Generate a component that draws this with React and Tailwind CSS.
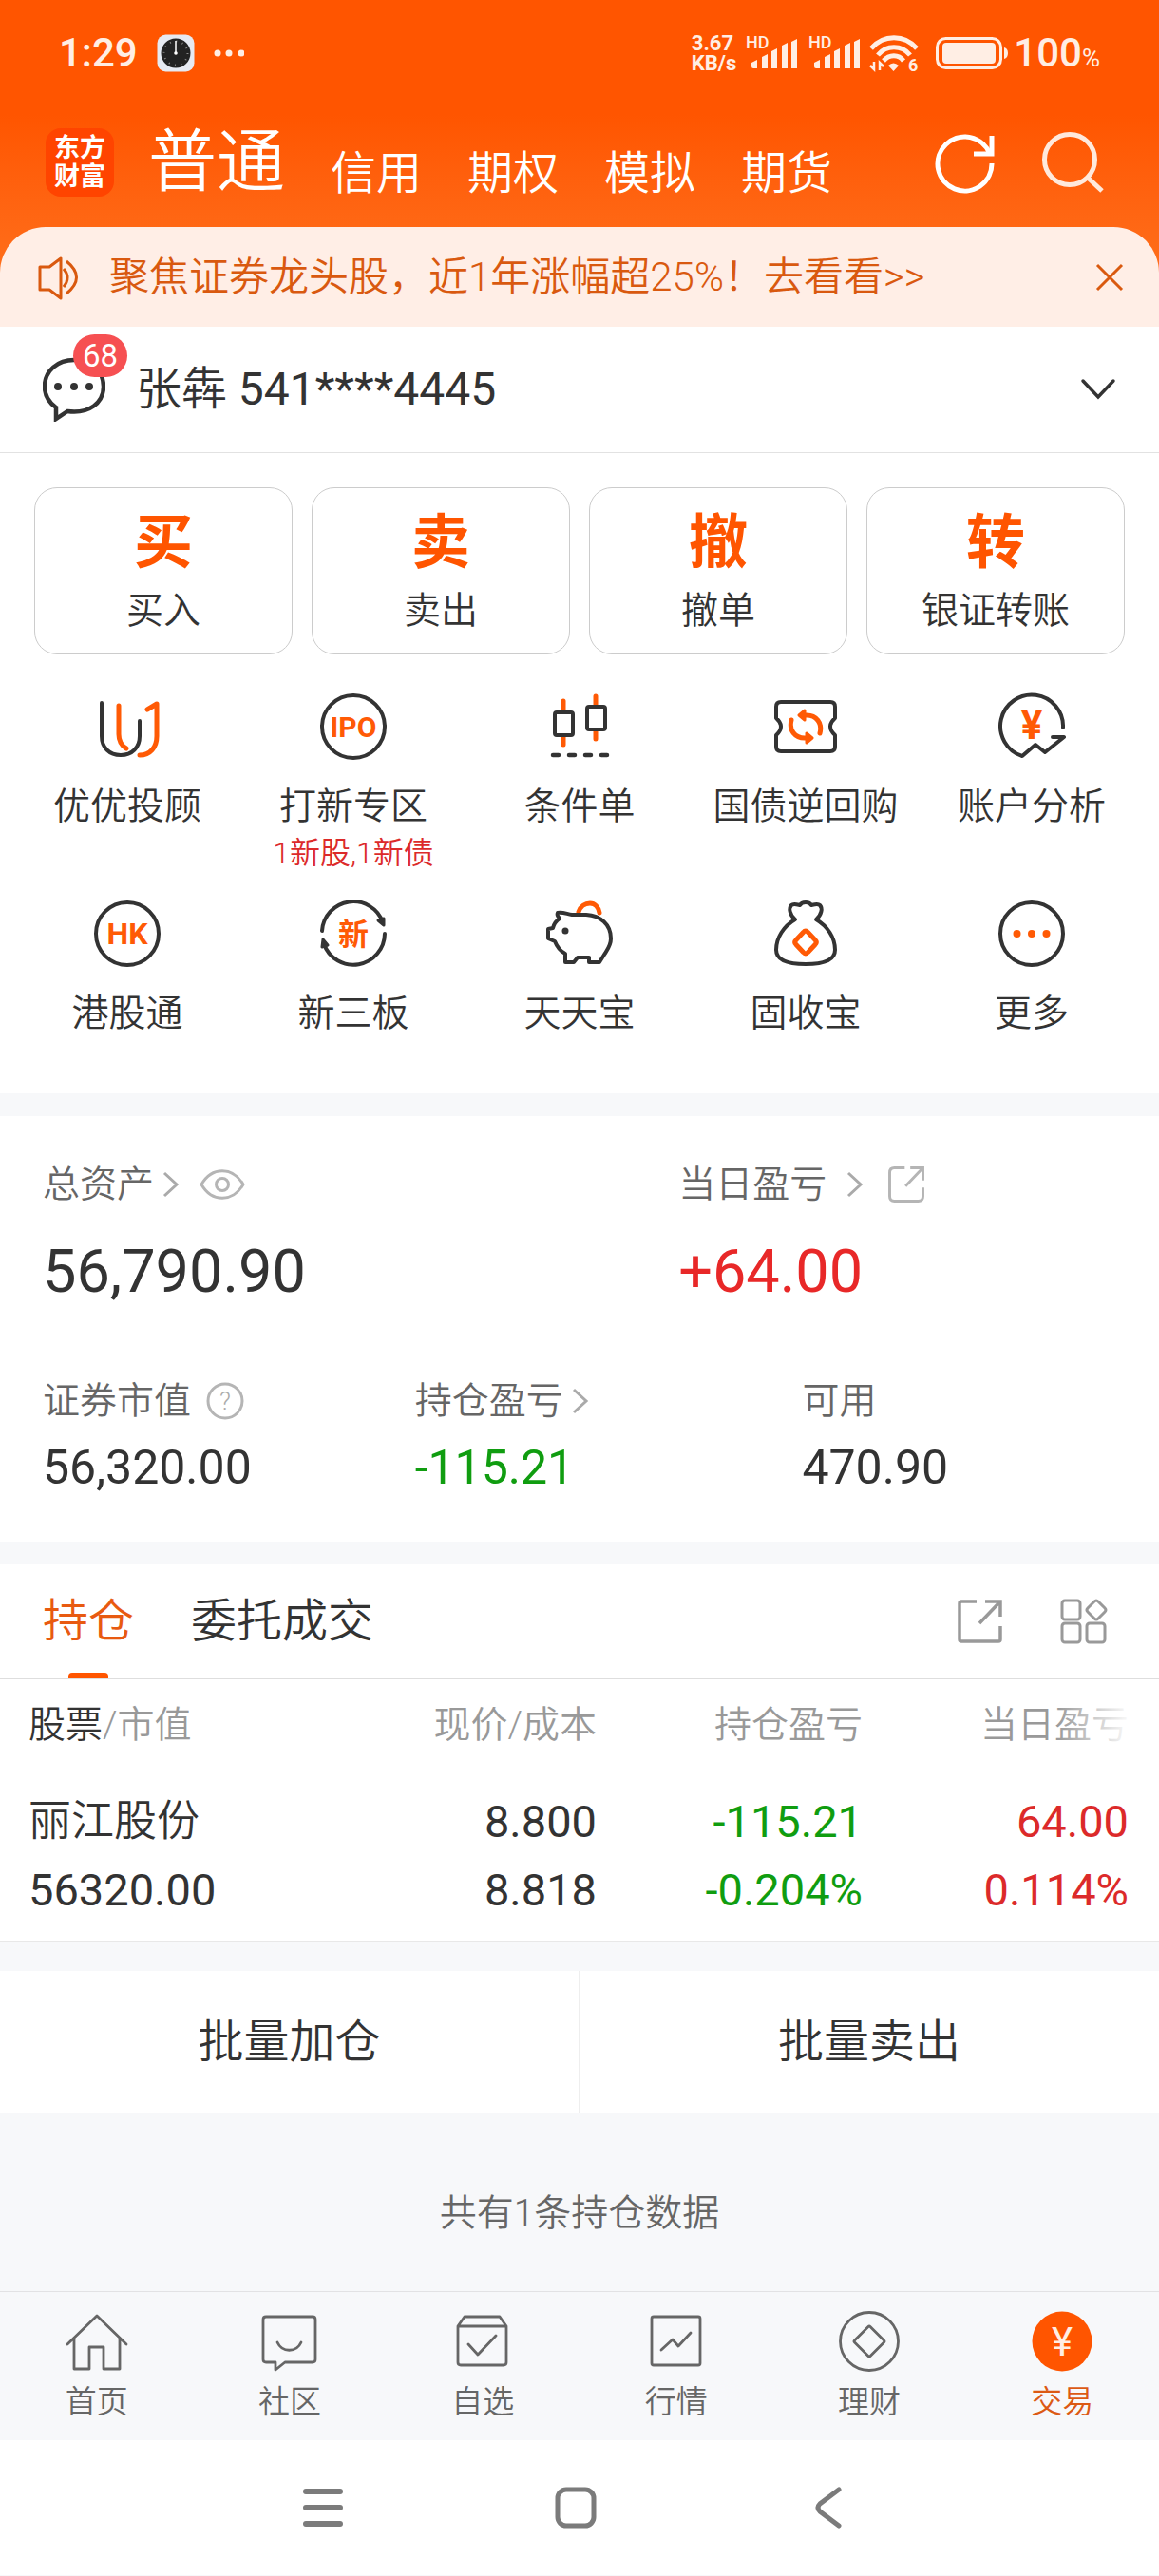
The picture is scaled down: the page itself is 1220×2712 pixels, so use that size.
import { useState } from 'react'

const markets = ['信用', '期权', '模拟', '期货']

const actions = [
  { mark: '买', label: '买入' },
  { mark: '卖', label: '卖出' },
  { mark: '撤', label: '撤单' },
  { mark: '转', label: '银证转账' },
]

const holdings = [
  {
    name: '丽江股份',
    value: '56320.00',
    price: '8.800',
    cost: '8.818',
    profit: '-115.21',
    profitRate: '-0.204%',
    today: '64.00',
    todayRate: '0.114%',
  },
]

function toneOf(value) {
  return value.startsWith('-') ? 'text-[#109d10]' : 'text-[#dc2a2a]'
}

/* ---------- status bar ---------- */

function ClockAppIcon() {
  return (
    <svg width="40" height="40" viewBox="0 0 40 40" aria-hidden="true">
      <rect x="0.5" y="0.5" width="39" height="39" rx="9" fill="#e6eaf2" />
      <circle cx="20" cy="20" r="15.5" fill="#222" />
      <circle cx="20" cy="20" r="12.5" fill="none" stroke="#888" strokeWidth="2" strokeDasharray="1 5.54" />
      <path d="M20 20V7" stroke="#fff" strokeWidth="1.5" />
      <circle cx="20" cy="20" r="1.8" fill="#fff" />
    </svg>
  )
}

function Signal() {
  return (
    <svg width="58" height="56" viewBox="-2 -9 58 56" fill="#ffeee4" aria-hidden="true">
      <text x="0" y="14" fontSize="18" fontWeight="500" fontFamily="Roboto">HD</text>
      <path d="M6 29l6-3v9H8a2 2 0 0 1-2-2z" />
      <path d="M17 23l6-3v15h-6zM27 17l6-3v21h-6zM38 11l6-3v27h-6zM48 7l6-3v31h-6z" />
    </svg>
  )
}

function Wifi() {
  return (
    <svg width="54" height="56" viewBox="0 -8 54 56" fill="none" stroke="#ffeee4" strokeWidth="5" aria-hidden="true">
      <path d="M2 15C15 0 37 0 50 15" />
      <path d="M9 22C18 11 34 11 43 22" />
      <path d="M15 28C21 21 31 21 36 28" />
      <path d="M20 33q5.500-5 11 0l-5.500 6z" fill="#ffeee4" stroke="none" />
      <path d="M5 29v8l-4-4M11 38v-8l4 4" strokeWidth="2.500" />
      <text x="41" y="39" fontSize="18" fontWeight="700" fontFamily="Roboto" fill="#ffeee4" stroke="none">6</text>
    </svg>
  )
}

function Battery() {
  return (
    <svg width="78" height="34" viewBox="0 0 78 34" aria-hidden="true">
      <rect x="1.500" y="1.500" width="67" height="31" rx="9" fill="none" stroke="#ffeee4" strokeWidth="3" />
      <rect x="7" y="6" width="56" height="22" rx="4" fill="#ffeee4" />
      <path d="M72 11q4 1 4 6t-4 6z" fill="#ffeee4" />
    </svg>
  )
}

function StatusBar() {
  return (
    <div className="flex h-28 items-center justify-between px-[62px] text-[#ffeee4]">
      <div className="flex items-center gap-5">
        <span className="text-[42px] leading-[48px] font-medium">1:29</span>
        <ClockAppIcon />
        <svg width="32" height="8" viewBox="0 0 32 8" fill="#ffeee4" aria-hidden="true">
          <circle cx="4" cy="4" r="3.500" />
          <circle cx="16" cy="4" r="3.500" />
          <circle cx="29" cy="4" r="3.500" />
        </svg>
      </div>
      <div className="flex items-center gap-2">
        <div className="text-[22px] leading-[21px] font-bold">
          <div>3.67</div>
          <div>KB/s</div>
        </div>
        <Signal />
        <Signal />
        <Wifi />
        <div className="flex items-center pl-2">
          <Battery />
          <span className="ml-1 flex items-baseline text-[42px] leading-[48px] font-medium">
            100<span className="text-[26px] leading-[26px] font-normal">%</span>
          </span>
        </div>
      </div>
    </div>
  )
}

/* ---------- header ---------- */

function RefreshIcon() {
  return (
    <svg width="72" height="72" viewBox="0 0 72 72" fill="none" stroke="#fff" strokeWidth="5" aria-hidden="true">
      <path d="M64 37A28.500 28.500 0 1 1 62 27" />
      <path d="M64 8v19H45" />
    </svg>
  )
}

function SearchIcon() {
  return (
    <svg width="72" height="72" viewBox="0 0 72 72" fill="none" stroke="#ffe9dc" strokeWidth="5" aria-hidden="true">
      <circle cx="34" cy="33" r="26.500" />
      <path d="M53 52l15 14" />
    </svg>
  )
}

function Header() {
  return (
    <header className="flex items-center pt-[23px] pr-14 pb-8 pl-12 text-white">
      <a
        href="#home"
        className="flex size-[72px] flex-col items-center justify-center rounded-2xl bg-[#ff4400] text-[27px] leading-[30px] font-bold"
      >
        <span>东方</span>
        <span>财富</span>
      </a>
      <nav className="ml-9 flex items-end gap-12 text-5xl leading-[48px]">
        <a href="#normal" className="text-7xl leading-[72px]">
          普通
        </a>
        {markets.map((m) => (
          <a key={m} href={`#${m}`}>
            {m}
          </a>
        ))}
      </nav>
      <div className="ml-auto flex gap-10">
        <button type="button" aria-label="刷新">
          <RefreshIcon />
        </button>
        <button type="button" aria-label="搜索">
          <SearchIcon />
        </button>
      </div>
    </header>
  )
}

function Notice({ onClose }) {
  return (
    <div className="flex items-center rounded-t-[48px] bg-[#ffeee6] py-6 pr-9 pl-[39px] text-[#d9590f]">
      <svg width="44" height="48" viewBox="0 0 44 48" fill="none" stroke="#d9590f" strokeWidth="3" aria-hidden="true">
        <path d="M3 13h10L25 4v42l-12-9H3z" strokeLinejoin="round" />
        <path d="M28 15q8 9 0 19M31 7q21 17 0 34" />
      </svg>
      <a href="#topic" className="ml-8 text-[42px] leading-[57px]">
        聚焦证券龙头股，近1年涨幅超25%！去看看&gt;&gt;
      </a>
      <button type="button" aria-label="关闭" className="ml-auto" onClick={onClose}>
        <svg width="32" height="32" viewBox="0 0 32 32" stroke="#d9590f" strokeWidth="3" aria-hidden="true">
          <path d="M3 3l26 26M29 3L3 29" />
        </svg>
      </button>
    </div>
  )
}

function Account() {
  return (
    <div className="flex items-center border-b border-[#e2e2e2] bg-white py-8 pr-11 pl-[45px]">
      <button type="button" aria-label="消息" className="relative">
        <svg width="66" height="68" viewBox="0 0 66 68" fill="none" stroke="#333" strokeWidth="4.500" aria-hidden="true">
          <path d="M33 3C16 3 2 14 2 31c0 10 5 17 12 22v12l12-8c23 3 38-9 38-26C64 14 50 3 33 3z" />
          <g fill="#333" stroke="none">
            <circle cx="16" cy="31" r="4" />
            <circle cx="33" cy="31" r="4" />
            <circle cx="49" cy="31" r="4" />
          </g>
        </svg>
        <span className="absolute -top-6 left-8 rounded-full bg-[#f65052] px-2.5 text-[33px] leading-[45px] font-normal text-white">
          68
        </span>
      </button>
      <span className="ml-8 text-[48px] leading-[60px]">
        张犇 <span className="font-normal">541****4445</span>
      </span>
      <button type="button" aria-label="切换账户" className="ml-auto">
        <svg width="40" height="24" viewBox="0 0 40 24" fill="none" stroke="#333" strokeWidth="3.500" strokeLinecap="round" aria-hidden="true">
          <path d="M4 3l16 17L36 3" />
        </svg>
      </button>
    </div>
  )
}

/* ---------- shortcuts ---------- */

function ToolIcon({ children }) {
  return (
    <svg
      width="80"
      height="80"
      viewBox="0 0 80 80"
      fill="none"
      stroke="#333"
      strokeWidth="4"
      strokeLinecap="round"
      strokeLinejoin="round"
      aria-hidden="true"
    >
      {children}
    </svg>
  )
}

function IconText({ size, y, children }) {
  return (
    <text
      x="40"
      y={y}
      fontSize={size}
      textAnchor="middle"
      fill="#ff5a05"
      stroke="none"
      className="font-['Roboto','Noto_Sans_CJK_SC',sans-serif] font-bold"
    >
      {children}
    </text>
  )
}

const tools = [
  {
    label: '优优投顾',
    icon: (
      <ToolIcon>
        <path d="M13 15v35c0 12 8 20 20 20s20-8 20-20V34" />
        <g stroke="#ff5a05" strokeWidth="5">
          <path d="M31 18v30c0 6 3 12 8 15M53 70c11 0 18-8 18-20V16l-10 6" />
        </g>
      </ToolIcon>
    ),
  },
  {
    label: '打新专区',
    note: '1新股,1新债',
    icon: (
      <ToolIcon>
        <circle cx="40" cy="40" r="33" />
        <IconText size="30" y="51">IPO</IconText>
      </ToolIcon>
    ),
  },
  {
    label: '条件单',
    icon: (
      <ToolIcon>
        <path d="M23 13v10M23 50v9M57 8v9M57 44v9" stroke="#ff5a05" strokeWidth="5" />
        <rect x="14" y="25" width="19" height="24" rx="2" />
        <rect x="48" y="19" width="19" height="24" rx="2" />
        <path d="M12 70h6M29 70h6M46 70h6M63 70h6" strokeWidth="4.500" />
      </ToolIcon>
    ),
  },
  {
    label: '国债逆回购',
    icon: (
      <ToolIcon>
        <path d="M9 19q0-5 5-5h52q5 0 5 5v12q-10 9 0 18v12q0 5-5 5H14q-5 0-5-5V49q10-9 0-18z" />
        <g stroke="#ff5a05" strokeWidth="5">
          <path d="M55 47c3-11-4-19-14-19h-4M25 33c-3 11 4 19 14 19h4" />
          <path d="M33 28l6-5v10zM47 52l-6-5v10z" fill="#ff5a05" strokeWidth="3" />
        </g>
      </ToolIcon>
    ),
  },
  {
    label: '账户分析',
    icon: (
      <ToolIcon>
        <path d="M73 41A33 33 0 1 0 30 71l14-12 10 8 20-16H62" />
        <IconText size="42" y="53">¥</IconText>
      </ToolIcon>
    ),
  },
  {
    label: '港股通',
    icon: (
      <ToolIcon>
        <circle cx="40" cy="40" r="33" />
        <IconText size="32" y="51">HK</IconText>
      </ToolIcon>
    ),
  },
  {
    label: '新三板',
    icon: (
      <ToolIcon>
        <path d="M7 37A33 33 0 0 1 71 28M73 40A33 33 0 0 1 9 51" />
        <path d="M66 26l6-2v7zM7 54l6-2-5-6z" fill="#333" strokeWidth="3" />
        <IconText size="32" y="52">新</IconText>
      </ToolIcon>
    ),
  },
  {
    label: '天天宝',
    icon: (
      <ToolIcon>
        <path d="M39 17c2-6 7-9 12-9s9 4 10 10" stroke="#ff5a05" strokeWidth="5" />
        <path d="M47 20c15 1 26 10 26 25 0 8-4 12-7 17l-5 8H50v-5H38l-4 5h-9V61c-6-3-9-8-11-13l-7-3V35l5-1c1-4 4-8 7-10-2-2-3-4-2-6 5-1 9 1 15 2z" />
        <circle cx="25" cy="37" r="3.500" fill="#333" stroke="none" />
      </ToolIcon>
    ),
  },
  {
    label: '固收宝',
    icon: (
      <ToolIcon>
        <path d="M29 25c-6-5-7-12-4-15 2-2 5-1 9 0 2-4 10-4 12 0 4-1 7-2 9 0 3 3 2 10-4 15 12 7 20 19 20 32 0 10-9 15-31 15S9 67 9 57c0-13 8-25 20-32z" />
        <path d="M37.500 38.500q2.500-3 5 0l7.500 8q2.500 2.500 0 5l-7.500 8q-2.500 3-5 0l-7.500-8q-2.500-2.500 0-5z" stroke="#ff5a05" strokeWidth="5" />
      </ToolIcon>
    ),
  },
  {
    label: '更多',
    icon: (
      <ToolIcon>
        <circle cx="40" cy="40" r="33" />
        <g fill="#ff5a05" stroke="none">
          <circle cx="24.500" cy="40" r="4" />
          <circle cx="40" cy="40" r="4" />
          <circle cx="55.500" cy="40" r="4" />
        </g>
      </ToolIcon>
    ),
  },
]

function Shortcuts() {
  return (
    <section className="bg-white pt-9 pb-15">
      <div className="grid grid-cols-4 gap-5 px-9">
        {actions.map((a) => (
          <button
            key={a.label}
            type="button"
            className="flex flex-col items-center gap-2 rounded-3xl border border-[#ccc] py-5"
          >
            <span className="text-[62px] leading-[76px] font-bold text-[#ff5500]">{a.mark}</span>
            <span className="text-[39px] leading-[50px]">{a.label}</span>
          </button>
        ))}
      </div>
      <div className="mt-9 grid grid-cols-5 gap-y-6 px-[15px]">
        {tools.map((t) => (
          <button key={t.label} type="button" className="flex flex-col items-center">
            {t.icon}
            <span className="mt-5 text-[39px] leading-[48px]">{t.label}</span>
            {t.note ? <span className="mt-1 text-[32px] leading-[42px] text-[#dc2a2a]">{t.note}</span> : null}
          </button>
        ))}
      </div>
    </section>
  )
}

/* ---------- assets ---------- */

function Chevron() {
  return (
    <svg width="20" height="28" viewBox="0 0 20 28" fill="none" stroke="#aaa" strokeWidth="3" aria-hidden="true">
      <path d="M3 2l13 12L3 26" />
    </svg>
  )
}

function EyeIcon() {
  return (
    <svg width="48" height="34" viewBox="0 0 48 34" fill="none" stroke="#b5b5b5" strokeWidth="3" aria-hidden="true">
      <path d="M2 17C13-2 35-2 46 17 35 36 13 36 2 17z" strokeLinejoin="round" />
      <circle cx="24" cy="17" r="6.500" />
    </svg>
  )
}

function ShareIcon({ size, color, radius }) {
  return (
    <svg width={size} height={size} viewBox="0 0 48 48" fill="none" stroke={color} strokeWidth="3.500" aria-hidden="true">
      <path d={radius ? 'M22 3H9Q3 3 3 9v30q0 6 6 6h30q6 0 6-6V28' : 'M20 3H4Q2 3 2 5v38q0 2 2 2h39q2 0 2-2V29'} />
      <path d="M29 3h16v16M45 3L23 26" />
    </svg>
  )
}

function HelpIcon() {
  return (
    <svg width="40" height="40" viewBox="0 0 40 40" aria-hidden="true">
      <circle cx="20" cy="20" r="18" fill="none" stroke="#b5b5b5" strokeWidth="3" />
      <text x="20" y="29" fontSize="26" textAnchor="middle" fontFamily="Roboto" fill="#aaa">?</text>
    </svg>
  )
}

function Assets() {
  const [hidden, setHidden] = useState(false)
  const show = (v) => (hidden ? '****' : v)

  return (
    <section className="bg-white px-[45px] py-12">
      <div className="grid grid-cols-[668fr_460fr]">
        <div>
          <div className="flex items-center text-[39px] leading-[48px] text-[#666]">
            <a href="#assets" className="flex items-center gap-2">
              总资产 <Chevron />
            </a>
            <button type="button" aria-label="显示或隐藏金额" className="ml-5" onClick={() => setHidden(!hidden)}>
              <EyeIcon />
            </button>
          </div>
          <div className="mt-8 text-[63px] leading-[72px] font-normal">{show('56,790.90')}</div>
        </div>
        <div>
          <div className="flex items-center text-[39px] leading-[48px] text-[#666]">
            <a href="#today" className="flex items-center gap-5">
              当日盈亏 <Chevron />
            </a>
            <button type="button" aria-label="分享盈亏" className="ml-6">
              <ShareIcon size="40" color="#b5b5b5" radius />
            </button>
          </div>
          <div className="mt-8 text-[63px] leading-[72px] font-normal text-[#e82828]">{show('+64.00')}</div>
        </div>
      </div>
      <div className="mt-19 grid grid-cols-[391fr_407fr_330fr]">
        <div>
          <div className="flex items-center gap-4 text-[39px] leading-[48px] text-[#666]">
            证券市值
            <button type="button" aria-label="说明">
              <HelpIcon />
            </button>
          </div>
          <div className="mt-4 text-[50px] leading-[60px] font-normal">{show('56,320.00')}</div>
        </div>
        <div>
          <a href="#profit" className="flex items-center gap-2 text-[39px] leading-[48px] text-[#666]">
            持仓盈亏 <Chevron />
          </a>
          <div className="mt-4 text-[50px] leading-[60px] font-normal text-[#109d10]">{show('-115.21')}</div>
        </div>
        <div>
          <div className="text-[39px] leading-[48px] text-[#666]">可用</div>
          <div className="mt-4 text-[50px] leading-[60px] font-normal">{show('470.90')}</div>
        </div>
      </div>
    </section>
  )
}

/* ---------- holdings ---------- */

function Holdings() {
  const [tab, setTab] = useState('持仓')

  return (
    <section className="mt-6 border-b border-[#e8e8e8] bg-white">
      <div className="flex items-center border-b border-[#dedede] pr-[54px] pl-[45px]">
        <div className="flex gap-15" role="tablist">
          {['持仓', '委托成交'].map((t) => (
            <button
              key={t}
              type="button"
              role="tab"
              aria-selected={tab === t}
              onClick={() => setTab(t)}
              className={'relative py-[30px] text-5xl leading-[60px] ' + (tab === t ? 'text-[#e85a10]' : '')}
            >
              {t}
              {tab === t ? (
                <span className="absolute bottom-0 left-1/2 h-1.5 w-[42px] -translate-x-1/2 rounded-t-sm bg-[#ff5500]" />
              ) : null}
            </button>
          ))}
        </div>
        <div className="ml-auto flex items-center gap-15">
          <button type="button" aria-label="分享持仓">
            <ShareIcon size="48" color="#999" />
          </button>
          <button type="button" aria-label="显示设置">
            <svg width="50" height="50" viewBox="0 0 50 50" fill="none" stroke="#999" strokeWidth="3" aria-hidden="true">
              <rect x="2" y="3" width="19" height="20" rx="3" />
              <rect x="2" y="27" width="19" height="20" rx="3" />
              <rect x="28" y="27" width="19" height="20" rx="3" />
              <path d="M36 4q2-2 4 0l7 7q2 2 0 4l-7 7q-2 2-4 0l-7-7q-2-2 0-4z" />
            </svg>
          </button>
        </div>
      </div>

      <div className="relative pr-8 pl-[30px]">
        <table className="w-full table-fixed">
          <thead>
            <tr className="text-right text-[39px] leading-[48px] text-[#999]">
              <th className="py-6 text-left font-[350]">
                <span className="text-[#333]">股票</span>/市值
              </th>
              <th className="w-[280px] py-6 font-[350]">现价/成本</th>
              <th className="w-[280px] py-6 font-[350]">持仓盈亏</th>
              <th className="w-[280px] py-6 font-[350]">当日盈亏</th>
            </tr>
          </thead>
          <tbody>
            {holdings.map((h) => (
              <tr key={h.name} className="text-right text-[47px] leading-[72px] font-normal">
                <td className="py-[18px] text-left">
                  <div className="text-[45px] leading-[72px] font-[350]">{h.name}</div>
                  <div>{h.value}</div>
                </td>
                <td className="py-[18px]">
                  <div>{h.price}</div>
                  <div>{h.cost}</div>
                </td>
                <td className={'py-[18px] ' + toneOf(h.profit)}>
                  <div>{h.profit}</div>
                  <div>{h.profitRate}</div>
                </td>
                <td className={'py-[18px] ' + toneOf(h.today)}>
                  <div>{h.today}</div>
                  <div>{h.todayRate}</div>
                </td>
              </tr>
            ))}
          </tbody>
        </table>
        {/* more columns hint */}
        <div className="pointer-events-none absolute top-0 right-7 h-24 w-20 bg-linear-to-r from-transparent to-white" />
      </div>
    </section>
  )
}

/* ---------- bottom navigation ---------- */

function TabIcon({ children }) {
  return (
    <svg
      width="72"
      height="72"
      viewBox="0 0 72 72"
      fill="none"
      stroke="#666"
      strokeWidth="2.800"
      strokeLinecap="round"
      strokeLinejoin="round"
      aria-hidden="true"
    >
      {children}
    </svg>
  )
}

const navItems = [
  {
    label: '首页',
    icon: (
      <TabIcon>
        <path d="M5 39L36 9l31 30M12 33v32h16V42h15v23h17V33" />
      </TabIcon>
    ),
  },
  {
    label: '社区',
    icon: (
      <TabIcon>
        <path d="M11 10h49q3 0 3 3v42q0 3-3 3H31l-10 8v-8H11q-3 0-3-3V13q0-3 3-3z" />
        <path d="M23 37c5 11 20 11 25 0" />
      </TabIcon>
    ),
  },
  {
    label: '自选',
    icon: (
      <TabIcon>
        <path d="M10 20l7-10h37l7 10v38q0 3-3 3H13q-3 0-3-3zh51M21 39l10 11 19-20" />
      </TabIcon>
    ),
  },
  {
    label: '行情',
    icon: (
      <TabIcon>
        <rect x="10" y="10" width="51" height="51" rx="2" />
        <path d="M20 45l12-11 6 7 13-14" />
      </TabIcon>
    ),
  },
  {
    label: '理财',
    icon: (
      <TabIcon>
        <circle cx="36" cy="36" r="30.500" />
        <path d="M35 20.500q1-1 2 0L51.500 35q1 1 0 2L37 51.500q-1 1-2 0L20.500 37q-1-1 0-2z" />
      </TabIcon>
    ),
  },
  {
    label: '交易',
    active: true,
    icon: (
      <TabIcon>
        <circle cx="36" cy="36" r="31.500" fill="#ff5500" stroke="none" />
        <text x="36" y="51" fontSize="42" fontWeight="400" textAnchor="middle" fontFamily="Roboto" fill="#ffeee4" stroke="none">¥</text>
      </TabIcon>
    ),
  },
]

function BottomNav() {
  return (
    <nav className="grid grid-cols-6 border-t border-[#e2e2e4] bg-[#f7f8fa] pt-4 pb-5">
      {navItems.map((n) => (
        <a
          key={n.label}
          href={`#${n.label}`}
          className={'flex flex-col items-center gap-2 text-[33px] leading-10 ' + (n.active ? 'text-[#dc5a14]' : 'text-[#666]')}
        >
          {n.icon}
          {n.label}
        </a>
      ))}
    </nav>
  )
}

function SystemNav() {
  return (
    <div className="flex items-center justify-center gap-[218px] bg-white py-[47px] pr-2">
      <button type="button" aria-label="最近任务">
        <svg width="48" height="48" viewBox="0 0 48 48" stroke="#7b7b7b" strokeWidth="6" strokeLinecap="round" aria-hidden="true">
          <path d="M6 7h36M6 24h36M6 41h36" />
        </svg>
      </button>
      <button type="button" aria-label="主屏幕">
        <svg width="48" height="48" viewBox="0 0 48 48" fill="none" stroke="#7b7b7b" strokeWidth="5" aria-hidden="true">
          <rect x="5" y="5" width="38" height="38" rx="9" />
        </svg>
      </button>
      <button type="button" aria-label="返回">
        <svg width="48" height="48" viewBox="0 0 48 48" fill="none" stroke="#7b7b7b" strokeWidth="5" strokeLinecap="round" aria-hidden="true">
          <path d="M35 5L15 20q-4 4 0 8l20 15" />
        </svg>
      </button>
    </div>
  )
}

export default function App() {
  const [notice, setNotice] = useState(true)

  return (
    <div className="min-h-screen bg-[#f7f8fa] font-['Roboto','Noto_Sans_CJK_SC',sans-serif] font-[350] text-[#333]">
      <div className="bg-linear-to-b from-[#ff5500] from-35% to-[#ff7620]">
        <StatusBar />
        <Header />
        {notice ? <Notice onClose={() => setNotice(false)} /> : null}
      </div>
      <Account />
      <Shortcuts />
      <div className="mt-6">
        <Assets />
      </div>
      <Holdings />
      <div className="mt-[30px] grid grid-cols-2 divide-x divide-[#eee] bg-white text-5xl leading-[54px]">
        <button type="button" className="py-12">
          批量加仓
        </button>
        <button type="button" className="py-12">
          批量卖出
        </button>
      </div>
      <p className="pt-20 pb-[57px] text-center text-[39px] leading-[50px] text-[#666]">共有1条持仓数据</p>
      <BottomNav />
      <SystemNav />
    </div>
  )
}
